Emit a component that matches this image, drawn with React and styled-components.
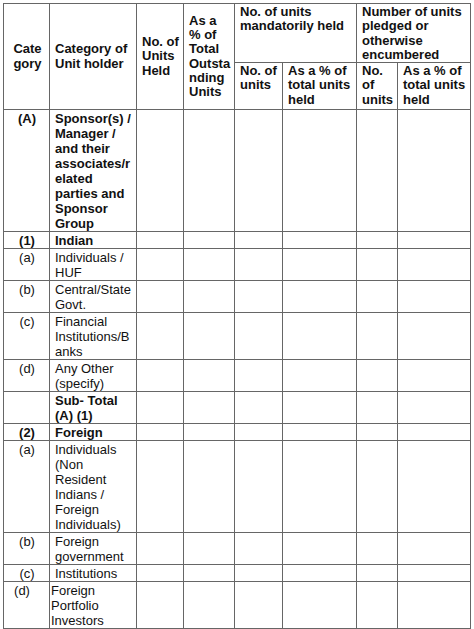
import styled, { createGlobalStyle } from "styled-components";

const GlobalStyle = createGlobalStyle`
  body {
    margin: 0;
    background: #fff;
  }
`;

const Page = styled.div`
  padding: 3px 0 0 3px;
  font-family: "Liberation Sans", Arial, sans-serif;
  font-size: 13px;
  color: #111;
`;

const Table = styled.table`
  border-collapse: collapse;
  table-layout: fixed;
  width: 468px;
`;

const HeadRow = styled.tr`
  height: ${(p) => p.$h}px;
`;

const Th = styled.th`
  border: 1px solid #666;
  padding: ${(p) => (p.$top ? "1px 3px 0 5px" : "0 3px 0 5px")};
  font-weight: 700;
  line-height: 14.25px;
  text-align: ${(p) => (p.$center ? "center" : "left")};
  vertical-align: ${(p) => (p.$top ? "top" : "middle")};
  white-space: pre-line;
`;

const Td = styled.td`
  border: 1px solid #666;
  padding: ${(p) =>
    p.$center
      ? p.$shift
        ? "1px 9px 0 0"
        : "1px 2px 0 3px"
      : p.$shift
        ? "1px 3px 0 1px"
        : "1px 3px 0 5px"};
  font-weight: ${(p) => (p.$bold ? 700 : 400)};
  line-height: 15px;
  text-align: ${(p) => (p.$center ? "center" : "left")};
  vertical-align: top;
  white-space: pre-line;
`;

const widths = [46, 87, 47, 51, 48, 74, 41, 73];

const rows = [
  {
    code: "(A)",
    label:
      "Sponsor(s) /\nManager /\nand their\nassociates/r\nelated\nparties and\nSponsor\nGroup",
    bold: true,
  },
  { code: "(1)", label: "Indian", bold: true },
  { code: "(a)", label: "Individuals /\nHUF" },
  { code: "(b)", label: "Central/State\nGovt." },
  { code: "(c)", label: "Financial\nInstitutions/B\nanks" },
  { code: "(d)", label: "Any Other\n(specify)" },
  { code: "", label: "Sub- Total\n(A) (1)", bold: true },
  { code: "(2)", label: "Foreign", bold: true },
  {
    code: "(a)",
    label: "Individuals\n(Non\nResident\nIndians /\nForeign\nIndividuals)",
  },
  { code: "(b)", label: "Foreign\ngovernment" },
  { code: "(c)", label: "Institutions" },
  { code: "(d)", label: "Foreign\nPortfolio\nInvestors", shift: true },
];

export default function App() {
  return (
    <>
      <GlobalStyle />
      <Page>
        <Table>
          <colgroup>
            {widths.map((w, i) => (
              <col key={i} style={{ width: w }} />
            ))}
          </colgroup>
          <thead>
            <HeadRow $h={59}>
              <Th rowSpan={2} $center>
                {"Cate\ngory"}
              </Th>
              <Th rowSpan={2}>{"Category of\nUnit holder"}</Th>
              <Th rowSpan={2}>{"No. of\nUnits\nHeld"}</Th>
              <Th rowSpan={2}>{"As a\n% of\nTotal\nOutsta\nnding\nUnits"}</Th>
              <Th colSpan={2} $top>
                {"No. of units\nmandatorily held"}
              </Th>
              <Th colSpan={2} $top>
                {"Number of units\npledged or\notherwise\nencumbered"}
              </Th>
            </HeadRow>
            <HeadRow $h={47}>
              <Th $top>{"No. of\nunits"}</Th>
              <Th $top>{"As a % of\ntotal units\nheld"}</Th>
              <Th $top>{"No.\nof\nunits"}</Th>
              <Th $top>{"As a % of\ntotal units\nheld"}</Th>
            </HeadRow>
          </thead>
          <tbody>
            {rows.map((r, i) => (
              <tr key={i}>
                <Td $center $bold={r.bold} $shift={r.shift}>
                  {r.code}
                </Td>
                <Td $bold={r.bold} $shift={r.shift}>
                  {r.label}
                </Td>
                <Td />
                <Td />
                <Td />
                <Td />
                <Td />
                <Td />
              </tr>
            ))}
          </tbody>
        </Table>
      </Page>
    </>
  );
}
